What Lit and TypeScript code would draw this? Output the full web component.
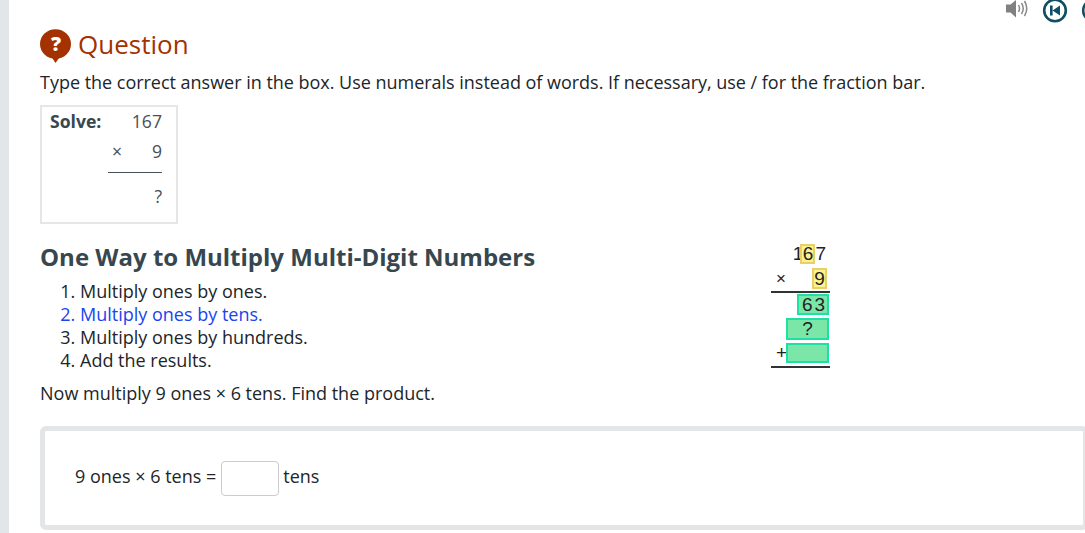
import { LitElement, html, css } from "lit";
import { customElement } from "lit/decorators.js";

@customElement("app-root")
export class AppRoot extends LitElement {
  static styles = css`
    :host { display: block; width: 1085px; height: 533px; overflow: hidden; font-family: "Open Sans", sans-serif; font-size: 18px; color: #212529; background: #fff; }
    .page { display: flex; height: 533px; overflow: hidden; }
    .rail { width: 9px; flex: none; background: #e3e6e8; }
    .main { flex: none; width: 1076px; padding-left: 31px; box-sizing: border-box; position: relative; }
    .tools { position: absolute; top: 0; left: 0; width: 1076px; height: 24px; overflow: hidden; }
    .speaker { position: absolute; left: 996px; top: 0; }
    .back { position: absolute; left: 1033px; top: 0; }
    .next { position: absolute; left: 1072px; top: 0; }
    .title { display: flex; align-items: center; gap: 7px; height: 34px; margin-top: 29px; font-size: 26px; color: #a33200; line-height: 34px; }
    .title span { margin-top: -4px; }
    .instr { margin: 6px 0 0; line-height: 26px; white-space: nowrap; letter-spacing: -0.02px; }
    .solve { box-sizing: border-box; width: 138px; height: 119px; margin-top: 10px; border: 2px solid #e6e6e6; color: #4a4f53; }
    .solve-grid { display: grid; grid-template-columns: 58px 54px; grid-template-rows: 30px 29px 14px 26px; padding: 1px 0 0 8px; line-height: 26px; font-size: 17.6px; }
    .solve-grid b { color: #37474f; font-weight: 700; }
    .r { text-align: right; }
    .mul { display: flex; justify-content: space-between; padding-left: 4px; }
    .rule { grid-column: 2; border-bottom: 1px solid #4a4f53; height: 5px; }
    .blank { grid-column: 1; }
    .q { padding-top: 2px; }
    .lesson { display: grid; grid-template-columns: 731px 59px; }
    h2 { margin: 16px 0 0; font-size: 24px; line-height: 33px; font-weight: 700; color: #37474f; white-space: nowrap; }
    ol { margin: 7px 0 0; padding: 0 0 0 40px; line-height: 23px; }
    .blue { color: #1a44ee; }
    .now { margin: 8px 0 0; line-height: 26px; white-space: nowrap; }
    .diagram { padding-top: 20px; font-family: "Liberation Sans", sans-serif; font-size: 19px; color: #222; display: flex; flex-direction: column; }
    .row { display: flex; justify-content: flex-end; align-items: center; padding-right: 1px; box-sizing: border-box; }
    .y { background: #fcf28f; border: 2px solid #e8cf6a; box-sizing: border-box; width: 15px; height: 100%; display: flex; align-items: center; justify-content: center; }
    .r1 { height: 20px; padding-right: 4px; }
    .r1 span:first-child { margin-right: -3px; }
    .r2 { height: 21px; margin-top: 4px; padding-right: 3px; }
    .x { font-size: 17px; margin-right: auto; margin-left: 5px; }
    .line { background: #333; height: 2px; flex: none; }
    .l1 { margin-top: 2px; }
    .r3 { height: 21px; margin-top: 1px; }
    .r4 { height: 22px; margin-top: 3px; }
    .r5 { height: 20px; margin-top: 3px; }
    .l2 { margin-top: 3px; }
    .g { background: #7ae6a8; border: 2px solid #1fe0a4; box-sizing: border-box; display: flex; align-items: center; justify-content: center; height: 100%; }
    .w1 { width: 32px; letter-spacing: 2px; padding-left: 3px; }
    .w2 { width: 43px; }
    .plus { margin-right: -1px; }
    .answer { box-sizing: border-box; margin-top: 20px; width: 1048px; height: 104px; border: 5px solid #e3e5e7; border-radius: 6px; display: flex; align-items: center; padding-left: 30px; gap: 4px; }
    .answer span:not(.field) { margin-top: -4px; }
    .field { width: 58px; height: 35px; box-sizing: border-box; border: 1px solid #ccc; border-radius: 4px; background: #fff; margin-left: 1px; }
  `;
  render() {
    return html`<div class="page">
      <div class="rail"></div>
      <div class="main">
        <div class="tools">
          <svg class="speaker" width="24" height="18" viewBox="0 0 24 18"><path d="M1 4.500h4.500L11 0v17.500l-5.500-5H1z" fill="#808080"/><path d="M13.500 5q2 3.500 0 7M16.500 3q3.500 5.500 0 11M19.500 1q4.500 7.500 0 15" fill="none" stroke="#888" stroke-width="1.500"/></svg>
          <svg class="back" width="26" height="24" viewBox="0 0 26 24"><circle cx="13" cy="10.500" r="10.800" fill="none" stroke="#0d4f63" stroke-width="2.600"/><path d="M8 5.500h2.600v10H8zM18 5.500v10l-7.500-5z" fill="#0d4f63"/></svg>
          <svg class="next" width="10" height="24" viewBox="0 0 10 24"><circle cx="13" cy="10.500" r="10.800" fill="none" stroke="#0d4f63" stroke-width="2.600"/></svg>
        </div>
        <div class="title">
          <svg width="31" height="34" viewBox="0 0 31 34"><ellipse cx="15.500" cy="15" rx="15.500" ry="14.800" fill="#a33200"/><path d="M11 27h9.500l-5 7z" fill="#a33200"/><text x="16" y="21.500" text-anchor="middle" font-family="Open Sans" font-size="20" font-weight="800" fill="#fff">?</text></svg>
          <span>Question</span>
        </div>
        <p class="instr">Type the correct answer in the box. Use numerals instead of words. If necessary, use / for the fraction bar.</p>
        <div class="solve"><div class="solve-grid">
          <b>Solve:</b><span class="r">167</span>
          <span></span><div class="mul"><span>×</span><span>9</span></div>
          <span class="blank"></span><div class="rule"></div>
          <span></span><span class="r q">?</span>
        </div></div>
        <div class="lesson">
          <div>
            <h2>One Way to Multiply Multi-Digit Numbers</h2>
            <ol><li>Multiply ones by ones.</li><li class="blue">Multiply ones by tens.</li><li>Multiply ones by hundreds.</li><li>Add the results.</li></ol>
            <p class="now">Now multiply 9 ones × 6 tens. Find the product.</p>
          </div>
          <div class="diagram">
            <div class="row r1"><span>1</span><span class="y">6</span><span>7</span></div>
            <div class="row r2"><span class="x">×</span><span class="y">9</span></div>
            <div class="line l1"></div>
            <div class="row r3"><span class="g w1">63</span></div>
            <div class="row r4"><span class="g w2">?</span></div>
            <div class="row r5"><span class="plus">+</span><span class="g w2"></span></div>
            <div class="line l2"></div>
          </div>
        </div>
        <div class="answer"><span>9 ones × 6 tens =</span><span class="field"></span><span>tens</span></div>
      </div>
    </div>`;
  }
}
